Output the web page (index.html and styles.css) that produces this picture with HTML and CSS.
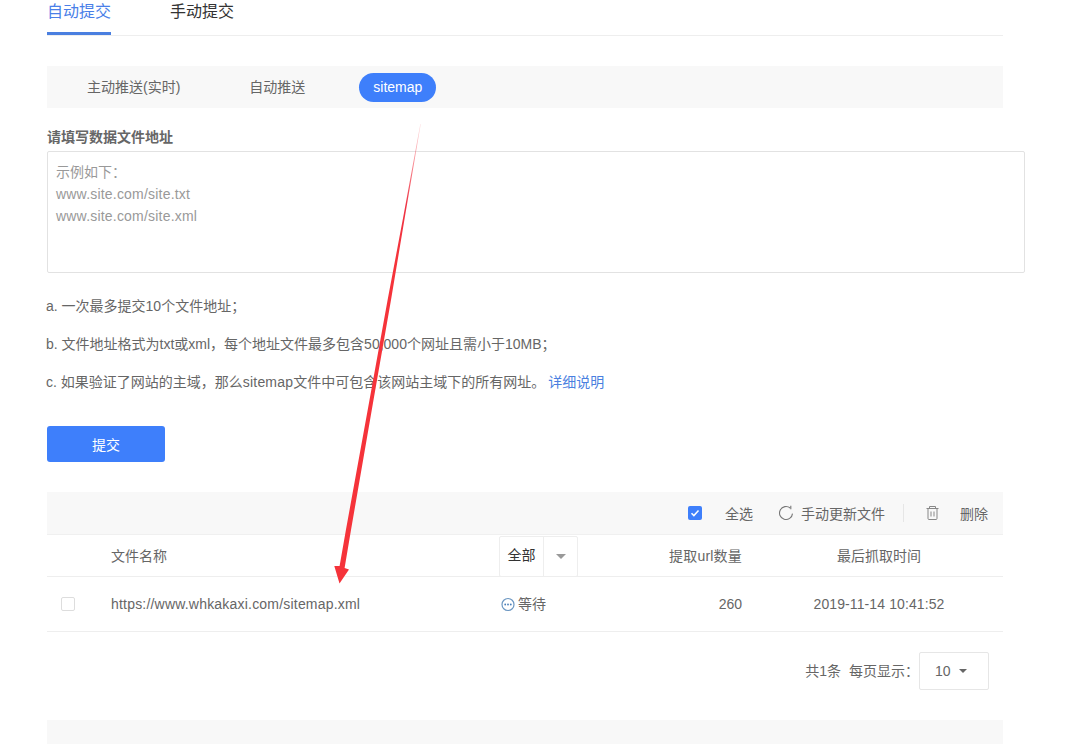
FILE: index.html
```html
<!DOCTYPE html>
<html lang="en">
<head>
    <meta charset="UTF-8">
    <meta name="viewport" content="width=device-width, initial-scale=1.0">
    <title>sitemap</title>
    <link rel="stylesheet" href="styles.css">
</head>
<body>

<div id="page">
    <div class="tabs">
        <div class="tab active">自动提交</div>
        <div class="tab">手动提交</div>
    </div>

    <div class="subnav">
        <span class="subnav-item first">主动推送(实时)</span>
        <span class="subnav-item second">自动推送</span>
        <span class="subnav-item pill">sitemap</span>
    </div>

    <div class="field-label">请填写数据文件地址</div>
    <div class="textarea">示例如下：<br><span class="latin">www.site.com/site.txt</span><br><span class="latin">www.site.com/site.xml</span></div>

    <div class="notes">
        <p>a. 一次最多提交10个文件地址；</p>
        <p>b. 文件地址格式为txt或xml，每个地址文件最多包含50,000个网址且需小于10MB；</p>
        <p>c. 如果验证了网站的主域，那么<span class="latin">sitemap</span>文件中可包含该网站主域下的所有网址。<a class="link">详细说明</a></p>
    </div>

    <button class="submit">提交</button>

    <div class="toolbar">
        <span class="checkbox checked">
            <svg width="14" height="14" viewBox="0 0 14 14"><path d="M3.5 7.2l2.4 2.4 4.6-5" fill="none" stroke="#fff" stroke-width="1.5"/></svg>
        </span>
        <span class="tool select-all">全选</span>
        <svg class="tool-icon" width="16" height="16" viewBox="0 0 16 16"><path d="M11.2 3A6.5 6.5 0 1 0 13.5 8.6" fill="none" stroke="#777" stroke-width="1.1"/><path d="M11.8 .8v3.4" fill="none" stroke="#777" stroke-width="1.1"/></svg>
        <span class="tool update">手动更新文件</span>
        <span class="divider"></span>
        <svg class="tool-icon trash" width="14" height="16" viewBox="0 0 14 16"><path d="M.5 3.5h12M3.5 3.5V1.5h6v2M2 3.5v10a1 1 0 0 0 1 1h7a1 1 0 0 0 1-1v-10M5 6.5v5M8 6.5v5" fill="none" stroke="#888" stroke-width="1"/></svg>
        <span class="tool">删除</span>
    </div>

    <div class="table-row table-head">
        <span></span>
        <span>文件名称</span>
        <span class="status-filter"><b>全部</b><i><em class="caret gray"></em></i></span>
        <span class="num latin">提取url数量</span>
        <span class="time">最后抓取时间</span>
    </div>
    <div class="table-row table-body">
        <span><span class="checkbox"></span></span>
        <span class="latin">https://www.whkakaxi.com/sitemap.xml</span>
        <span class="status">
            <svg width="15" height="15" viewBox="0 0 15 15"><circle cx="7" cy="7.5" r="6" fill="none" stroke="#6c97c2" stroke-width="1.2"/><circle cx="4.2" cy="7.5" r=".9" fill="#4a7fb8"/><circle cx="7" cy="7.5" r=".9" fill="#4a7fb8"/><circle cx="9.8" cy="7.5" r=".9" fill="#4a7fb8"/></svg>
            <span class="status-text">等待</span>
        </span>
        <span class="num">260</span>
        <span class="time date">2019-11-14 10:41:52</span>
    </div>

    <div class="pager">
        <span class="pager-text">共1条</span>
        <span class="pager-text per-page">每页显示：</span>
        <span class="page-size">10<em class="caret"></em></span>
    </div>

    <div class="bottom-bar"></div>
</div>

<svg class="arrow" width="1083" height="744" viewBox="0 0 1083 744">
    <defs>
        <linearGradient id="arrow-fade" x1="0" y1="124" x2="0" y2="260" gradientUnits="userSpaceOnUse">
            <stop offset="0" stop-color="#f5333f" stop-opacity="0.15"/>
            <stop offset="0.6" stop-color="#ee3344"/>
            <stop offset="1" stop-color="#f5333a"/>
        </linearGradient>
    </defs>
    <path d="M420.3 124L403.6 215 387.6 300 369.5 400 345.9 530 339.6 566 334.3 566 339.5 583.5 349 569.5 344.6 568 351 530 373.5 400 391 300 405.2 215 420.8 124Z" fill="url(#arrow-fade)"/>
</svg>

</body>
</html>
```

FILE: styles.css
```css
body {
    margin: 0;
    height: 744px;
    overflow: hidden;
    background-color: #fff;
    color: #666;
    font-family: "Liberation Sans", "Noto Sans CJK SC", sans-serif;
    font-size: 14px;
}

#page {
    width: 956px;
    margin-left: 47px;
}

.latin {
    letter-spacing: 0.2px;
}

.tabs {
    display: flex;
    gap: 59px;
    height: 35px;
    border-bottom: 1px solid #eee;
}

.tab {
    height: 35px;
    box-sizing: border-box;
    font-size: 16px;
    line-height: 24px;
    color: #333;
}

.tab.active {
    color: #4a7fe8;
    border-bottom: 3px solid #4a7fe0;
}

.subnav {
    display: flex;
    align-items: center;
    height: 42px;
    margin-top: 30px;
    background-color: #f8f8f8;
}

.subnav-item {
    color: #666;
}

.subnav-item.first {
    margin-left: 40px;
    margin-bottom: 2px;
}

.subnav-item.second {
    margin-left: 69px;
    margin-bottom: 2px;
}

.subnav-item.pill {
    margin-left: 54px;
    width: 77px;
    height: 29px;
    line-height: 29px;
    text-align: center;
    color: #fff;
    background-color: #3e7ffb;
    border-radius: 15px;
}

.field-label {
    margin-top: 20px;
    height: 23px;
    line-height: 18px;
    font-weight: bold;
    color: #666;
}

.textarea {
    box-sizing: border-box;
    width: 978px;
    height: 122px;
    padding: 9px 8px;
    line-height: 22px;
    color: #999;
    border: 1px solid #e2e2e2;
    border-radius: 2px;
}

.notes {
    margin-top: 14px;
    margin-left: -1px;
}

.notes p {
    margin: 0;
    height: 38px;
    line-height: 38px;
}

.link {
    color: #4a7fe0;
    margin-left: 3px;
}

.submit {
    display: block;
    width: 118px;
    height: 36px;
    margin-top: 25px;
    padding: 0;
    font: inherit;
    color: #fff;
    background-color: #3e7ffb;
    border: none;
    border-radius: 3px;
}

.toolbar {
    display: flex;
    align-items: center;
    height: 42px;
    margin-top: 30px;
    padding-right: 15px;
    justify-content: flex-end;
    background-color: #f8f8f8;
    border-bottom: 1px solid #f0f0f0;
}

.checkbox {
    display: inline-block;
    box-sizing: border-box;
    width: 14px;
    height: 14px;
    border: 1px solid #ddd;
    border-radius: 2px;
    background-color: #fff;
}

.checkbox.checked {
    border: none;
    background-color: #3e7ffb;
}

.checkbox svg {
    display: block;
}

.select-all {
    margin-left: 23px;
    margin-right: 26px;
}

.tool-icon {
    margin-right: 6px;
}

.divider {
    width: 1px;
    height: 18px;
    margin: 0 22px 0 18px;
    background-color: #e6e6e6;
}

.tool-icon.trash {
    margin-right: 20px;
}

.table-row {
    display: grid;
    grid-template-columns: 64px 388px 163px 80px 261px;
    align-items: center;
    border-bottom: 1px solid #eee;
}

.table-head {
    height: 41px;
}

.table-head > span {
    margin-bottom: 3px;
}

.table-head > .status-filter {
    margin-bottom: 0;
}

.table-body {
    height: 54px;
}

.table-body .checkbox {
    display: block;
    margin-left: 14px;
}

.num {
    text-align: right;
    white-space: nowrap;
    justify-self: end;
}

.time {
    padding-left: 13px;
    text-align: center;
}

.date {
    letter-spacing: 0.1px;
}

.status-filter {
    display: flex;
    width: 79px;
    height: 41px;
    box-sizing: border-box;
    border: 1px solid #eee;
    border-radius: 2px;
    margin-top: 1px;
}

.status-filter b {
    width: 43px;
    font-weight: normal;
    line-height: 36px;
    text-align: center;
    color: #333;
    border-right: 1px solid #eee;
}

.status-filter i {
    flex: 1;
    display: flex;
    align-items: center;
    justify-content: center;
}

.caret {
    display: inline-block;
    border-left: 4px solid transparent;
    border-right: 4px solid transparent;
    border-top: 5px solid #666;
}

.caret.gray {
    border-left-width: 5px;
    border-right-width: 5px;
    border-top-color: #999;
}

.status {
    display: flex;
    align-items: center;
    gap: 2px;
    padding-left: 2px;
}

.status-text {
    margin-bottom: 2px;
}

.pager {
    display: flex;
    align-items: center;
    justify-content: flex-end;
    height: 38px;
    margin-top: 20px;
    padding-right: 14px;
}

.pager-text {
    margin-bottom: 2px;
}

.per-page {
    margin-left: 8px;
}

.page-size {
    display: flex;
    align-items: center;
    box-sizing: border-box;
    width: 70px;
    height: 38px;
    padding-left: 15px;
    border: 1px solid #e6e6e6;
    border-radius: 2px;
}

.page-size .caret {
    margin-left: 8px;
    border-left-width: 4px;
    border-right-width: 4px;
    border-top-width: 4px;
}

.bottom-bar {
    height: 24px;
    margin-top: 30px;
    background-color: #f8f8f8;
}

.arrow {
    position: absolute;
    left: 0;
    top: 0;
    pointer-events: none;
}
```
